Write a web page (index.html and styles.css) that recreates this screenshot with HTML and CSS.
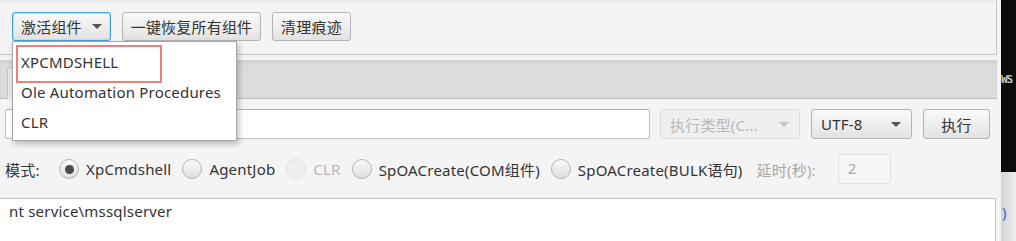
FILE: index.html
```html
<!DOCTYPE html>
<html lang="zh-CN">
<head>
  <meta charset="UTF-8">
  <title>组件管理</title>
  <link rel="stylesheet" href="styles.css">
</head>
<body>
  <div class="screen">
    <div class="app">
      <div class="toolbar">
        <button class="btn btn-focus btn-activate">激活组件 <span class="arrow"></span></button>
        <button class="btn btn-restore">一键恢复所有组件</button>
        <button class="btn btn-clean">清理痕迹</button>
      </div>

      <div class="tabbar">
        <div class="tab"></div>
      </div>

      <div class="cmd-row">
        <div class="field cmd-input"></div>
        <div class="combo combo-type disabled"><span>执行类型(C...</span><span class="arrow"></span></div>
        <div class="combo combo-enc"><span>UTF-8</span><span class="arrow"></span></div>
        <button class="btn btn-exec">执行</button>
      </div>

      <div class="mode-row">
        <span class="mode-label">模式:</span>
        <label class="radio checked"><span class="dot"></span>XpCmdshell</label>
        <label class="radio"><span class="dot"></span>AgentJob</label>
        <label class="radio disabled"><span class="dot"></span>CLR</label>
        <label class="radio"><span class="dot"></span>SpOACreate(COM组件)</label>
        <label class="radio"><span class="dot"></span>SpOACreate(BULK语句)</label>
        <span class="delay-label">延时(秒):</span>
        <div class="field delay-input">2</div>
      </div>

      <div class="output">nt service\mssqlserver</div>

      <div class="popup">
        <div class="popup-item">XPCMDSHELL</div>
        <div class="popup-item">Ole Automation Procedures</div>
        <div class="popup-item">CLR</div>
        <div class="mark"></div>
      </div>
    </div>

    <div class="side">
      <div class="term"><span>WS</span></div>
      <div class="desk"><span>)</span></div>
    </div>
  </div>
</body>
</html>
```

FILE: styles.css
```css
* {
  box-sizing: border-box;
  margin: 0;
  padding: 0;
}
body {
  font-family: 'Noto Sans', 'Noto Sans CJK SC', sans-serif;
  font-size: 15px;
  letter-spacing: 0.2px;
  color: #333;
  background: #f4f4f4;
  overflow: hidden;
}
.screen {
  display: flex;
  width: 1016px;
  height: 241px;
}
.app {
  position: relative;
  width: 1001px;
  padding-right: 4px;
  background: #f4f4f4;
  display: flex;
  flex-direction: column;
}

/* toolbar */
.toolbar {
  height: 55px;
  display: flex;
  gap: 11px;
  padding: 12px 0 0 12px;
  border-bottom: 1px solid #c8c8c8;
  border-right: 1px solid #c8c8c8;
  background: linear-gradient(#e6e6e6, #f4f4f4 4px);
}
.btn {
  height: 29px;
  font-family: inherit;
  font-size: 15px;
  letter-spacing: inherit;
  color: #333;
  border: 1px solid #b4b4b4;
  border-radius: 3px;
  background: linear-gradient(#fafafa, #e2e2e2);
  display: flex;
  align-items: center;
  justify-content: center;
}
.btn-focus {
  border-color: #3aa3df;
  box-shadow: inset 0 0 0 1px #bfe0f4;
}
.btn-activate {
  width: 99px;
  justify-content: flex-start;
  padding-left: 8px;
  gap: 10px;
}
.btn-restore { width: 139px; }
.btn-clean { width: 79px; }
.arrow {
  width: 0;
  height: 0;
  border-left: 5px solid transparent;
  border-right: 5px solid transparent;
  border-top: 5px solid #555;
}

/* tabs */
.tabbar {
  margin-top: 5px;
  height: 39px;
  background: #dcdcdc;
  border-top: 1px solid #d4d4d4;
  border-bottom: 1px solid #bcbcbc;
  box-shadow: inset 0 2px 2px #d2d2d2;
  padding: 6px 0 0 7px;
}
.tab {
  width: 90px;
  height: 32px;
  background: #e8e8e8;
  border: 1px solid #c4c4c4;
  border-bottom: none;
  border-radius: 3px 3px 0 0;
}

/* command row */
.cmd-row {
  display: flex;
  align-items: center;
  margin-top: 10px;
  padding-left: 5px;
  height: 30px;
}
.field {
  height: 30px;
  background: #fff;
  border: 1px solid #c2c2c2;
  border-top-color: #b4b4b4;
  border-radius: 3px;
}
.cmd-input { width: 645px; }
.combo {
  height: 30px;
  display: flex;
  align-items: center;
  justify-content: space-between;
  padding: 0 10px 0 9px;
  border: 1px solid #b4b4b4;
  border-radius: 3px;
  background: linear-gradient(#fafafa, #e2e2e2);
}
.combo-type {
  width: 140px;
  margin-left: 10px;
}
.combo-enc {
  width: 101px;
  margin-left: 11px;
}
.combo.disabled {
  color: #b8b8b8;
  border-color: #dcdcdc;
  background: #efefef;
}
.combo.disabled .arrow { border-top-color: #c4c4c4; }
.btn-exec {
  width: 67px;
  height: 30px;
  margin-left: 11px;
}

/* mode row */
.mode-row {
  display: flex;
  align-items: center;
  margin-top: 15px;
  padding-left: 5px;
  height: 30px;
}
.mode-label { width: 54px; }
.radio {
  display: flex;
  align-items: center;
  gap: 7px;
  margin-right: 11px;
}
.radio .dot {
  width: 20px;
  height: 20px;
  border-radius: 50%;
  border: 1px solid #b4b4b4;
  background: linear-gradient(#fafafa, #dedede);
  display: flex;
  align-items: center;
  justify-content: center;
}
.radio.checked .dot::after {
  content: '';
  width: 9px;
  height: 9px;
  border-radius: 50%;
  background: #4a4a4a;
}
.radio.disabled {
  color: #b8b8b8;
}
.radio.disabled .dot {
  border-color: #e0e0e0;
  background: #f0f0f0;
}
.delay-label {
  color: #a8a8a8;
  margin-left: 3px;
}
.delay-input {
  width: 53px;
  margin-left: 22px;
  color: #a8a8a8;
  border-color: #e0e0e0;
  background: #f6f6f6;
  padding: 3px 9px;
}

/* output */
.output {
  margin-top: 14px;
  margin-right: 1px;
  flex: 1;
  background: #fff;
  border-top: 1px solid #c4c4c4;
  border-right: 1px solid #c4c4c4;
  padding: 2px 9px;
  color: #333;
}

/* dropdown */
.popup {
  position: absolute;
  left: 12px;
  top: 41px;
  width: 225px;
  height: 100px;
  padding-top: 5px;
  background: #fff;
  border: 1px solid #a6a6a6;
  box-shadow: 2px 3px 6px rgba(0, 0, 0, 0.25);
}
.popup-item {
  height: 30px;
  line-height: 30px;
  padding-left: 8px;
  color: #333;
}
.mark {
  position: absolute;
  left: 3px;
  top: 3px;
  width: 146px;
  height: 38px;
  border: 2px solid #f07e78;
}

/* neighbouring windows */
.side {
  width: 15px;
  display: flex;
  flex-direction: column;
  overflow: hidden;
}
.term {
  height: 172px;
  background: #0c0c0c;
  padding-top: 73px;
  white-space: nowrap;
}
.term span {
  display: block;
  font-family: 'DejaVu Sans Mono', monospace;
  font-weight: bold;
  font-size: 11px;
  letter-spacing: -1px;
  color: #c8c8c8;
}
.desk {
  flex: 1;
  background: linear-gradient(to right, #d2d2d2, #eeeeee);
  padding-top: 30px;
}
.desk span {
  display: block;
  color: #2f6ad8;
  font-size: 15px;
  margin-left: 1px;
}
```
